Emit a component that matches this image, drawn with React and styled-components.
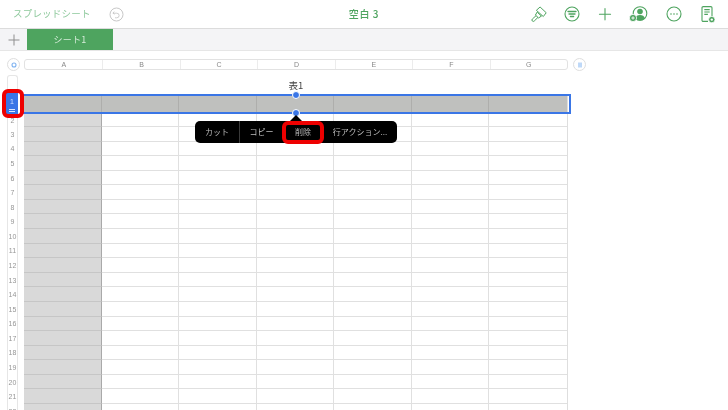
import React from "react";
import styled, { createGlobalStyle } from "styled-components";

const Global = createGlobalStyle`
  html, body { margin: 0; padding: 0; background: #fff; }
  body { font-family: "Noto Sans CJK JP", "Noto Sans", sans-serif; }
  #root { width: 728px; height: 410px; overflow: hidden; }
`;

const Page = styled.div`
  width: 728px; height: 410px; display: flex; flex-direction: column;
  overflow: hidden; background: #fff; filter: blur(0.3px);
`;
const TopBar = styled.header`
  height: 28px; flex: none; display: grid; grid-template-columns: 1fr auto 1fr;
  align-items: center; border-bottom: 1px solid #dcdcdc; color: #4ea45f;
`;
const TopLeft = styled.div`
  display: flex; align-items: center; gap: 18px; padding-left: 13px;
`;
const BackLabel = styled.span`
  font-size: 9.5px; color: #8fc99d; letter-spacing: 0.2px; line-height: 1;
`;
const Title = styled.div`
  font-size: 10px; font-weight: 500; color: #4ea45f; letter-spacing: 0.6px; line-height: 1;
`;
const TopRight = styled.div`
  display: flex; justify-content: flex-end; align-items: center; gap: 14px; padding-right: 10px;
`;
const TabBar = styled.div`
  height: 21px; flex: none; display: flex; background: #f4f4f6; border-bottom: 1px solid #e6e6e6;
`;
const AddTab = styled.div`
  width: 27px; display: flex; align-items: center; justify-content: center;
`;
const Tab = styled.div`
  width: 86px; background: #4ea45f; color: #d5ecd9; font-size: 9px; line-height: 1;
  display: flex; align-items: center; justify-content: center; letter-spacing: 0.3px;
`;
const Sheet = styled.main`
  position: relative; flex: 1; min-height: 0; padding-top: 8px; overflow: hidden;
`;
const ColBar = styled.div`
  display: flex; align-items: center; height: 11px; padding-left: 7px;
`;
const Knob = styled.div`
  width: 13px; height: 13px; border-radius: 50%; border: 1px solid #dedede; background: #fff;
  display: flex; align-items: center; justify-content: center; flex: none; box-sizing: border-box;
`;
const ColHeaders = styled.div`
  margin-left: 4px; margin-right: 5px; width: 544px; height: 11px; display: grid;
  grid-template-columns: repeat(7, 1fr); border: 1px solid #e2e2e2; border-radius: 3px; box-sizing: border-box;
`;
const ColHead = styled.div`
  font-family: "Liberation Sans", sans-serif; font-size: 7px; color: #888; line-height: 9px; text-align: center;
  border-left: ${p => (p.$first ? "none" : "1px solid #ececec")};
`;
const TableTitle = styled.div`
  height: 25px; width: 592px; text-align: center; font-size: 9.5px; line-height: 1; color: #444; padding-top: 11px;
  box-sizing: border-box;
`;
const Body = styled.div`
  display: flex; align-items: flex-start; padding-left: 7px;
`;
const RowHeads = styled.div`
  width: 11px; flex: none; margin-top: -20px; border: 1px solid #e6e6e6; border-bottom: none;
  border-radius: 3px 3px 0 0; box-sizing: border-box; padding-top: 19px;
`;
const RowHead = styled.div`
  height: ${p => p.$h}px; font-family: "Liberation Sans", sans-serif; font-size: 7px; color: #969696;
  display: flex; align-items: center; justify-content: center;
`;
const SelectedHead = styled.div`
  position: absolute; left: 6px; top: 42px; width: 13px; height: 22px; background: #3a76e6; color: #cfe0ff;
  font-family: "Liberation Sans", sans-serif; font-size: 7px; text-align: center; line-height: 18px;
  border-right: 1px solid #fff; box-sizing: border-box;
  &::after {
    content: ""; position: absolute; left: 3px; right: 3px; bottom: 3px; height: 1px;
    border-top: 1px solid #dfe9ff; border-bottom: 1px solid #dfe9ff;
  }
`;
const Grid = styled.div`
  margin-left: 6px; width: 544px; display: grid; grid-template-columns: repeat(7, 1fr);
  border-right: 1px solid #dedede; box-sizing: border-box;
`;
const Cell = styled.div`
  height: ${p => p.$h}px; box-sizing: border-box;
  background: ${p => (p.$kind === "head" ? "#bfc0be" : p.$kind === "col" ? "#d9d9d9" : "#fff")};
  border-bottom: 1px solid ${p => (p.$kind === "col" ? "#c6c6c6" : p.$kind === "head" ? "#bfc0be" : "#e0e0e0")};
  border-right: 1px solid ${p => (p.$kind === "head" ? "#aeaeac" : p.$kind === "col" ? "#a9a9a9" : "#e0e0e0")};
  &:nth-child(7n) { border-right: none; }
`;
const RowSelection = styled.div`
  position: absolute; left: 22px; top: 43px; width: 549px; height: 20px; border: 2px solid #3a76e6;
  box-sizing: border-box; pointer-events: none;
`;
const Handle = styled.div`
  position: absolute; left: 293px; top: ${p => p.$top}px; width: 6px; height: 6px; border-radius: 50%;
  background: #3a76e6; border: 1px solid #fff; box-sizing: content-box; margin: -1px;
`;
const Menu = styled.div`
  position: absolute; left: 195px; top: 70px; height: 22px; display: flex; align-items: center;
  background: #000; border-radius: 5px; color: #bcbcbc; font-size: 8px; line-height: 1;
  &::before {
    content: ""; position: absolute; left: 95px; top: -6px; border-left: 6px solid transparent;
    border-right: 6px solid transparent; border-bottom: 6px solid #000;
  }
`;
const MenuItem = styled.div`
  width: ${p => p.$w}px; height: 100%; display: flex; align-items: center; justify-content: center;
  border-left: ${p => (p.$div ? "1px solid #3a3a3a" : "none")}; box-sizing: border-box;
`;
const RedBox = styled.div`
  position: absolute; left: ${p => p.$l}px; top: ${p => p.$t}px; width: ${p => p.$w}px; height: ${p => p.$h}px;
  border: 4px solid #ee0000; border-radius: 6px; box-sizing: border-box; pointer-events: none;
`;

const G = "#4ea45f";
const Ico = ({ s = 20, children }) => (
  <svg width={s} height={s} viewBox="0 0 20 20" fill="none" stroke={G} strokeWidth="1.1" strokeLinecap="round" strokeLinejoin="round">
    {children}
  </svg>
);

const COLS = ["A", "B", "C", "D", "E", "F", "G"];
const ROW_H = 14.58;

export default function App() {
  const rows = Array.from({ length: 21 }, (_, i) => i + 2);
  return (
    <Page>
      <Global />
      <TopBar>
        <TopLeft>
          <BackLabel>スプレッドシート</BackLabel>
          <svg width="15" height="15" viewBox="0 0 15 15" fill="none" stroke="#c8c8c8" strokeWidth="1">
            <circle cx="7.5" cy="7.5" r="6.5" />
            <path d="M5.2 4.6 3.9 6.2l1.7 1M4.2 6.2h3.6a2.3 2.3 0 0 1 0 4.6H6" strokeWidth="0.9" />
          </svg>
        </TopLeft>
        <Title>空白 3</Title>
        <TopRight>
          <Ico s={18}>
            <path d="M11.5 2.5 18 8.6l-3.2 4.2-7.4-6.6z" />
            <path d="m8.5 8.5 3.5 3.2" />
            <path d="m8 7.8-2 3.4 3.6 3.2 3.2-2.2" />
            <path d="m6.6 12-4 3.6a1.5 1.5 0 0 0 2.1 2.2l3.9-3.8" />
          </Ico>
          <Ico>
            <circle cx="10" cy="10" r="7" />
            <path d="M6 7.5h8M7 10h6M8.4 12.5h3.2" strokeWidth="1.3" />
          </Ico>
          <Ico s={18}>
            <path d="M10 4v12.5M3.8 10.2h12.4" strokeWidth="1.2" />
          </Ico>
          <svg width="22" height="20" viewBox="0 0 22 20" fill="none">
            <circle cx="12" cy="9.5" r="6.8" stroke={G} strokeWidth="1.1" />
            <circle cx="12" cy="7.5" r="2.8" fill={G} />
            <path d="M7 14.6c.6-2.6 2.6-3.6 5-3.6s4.4 1 5 3.6a6.8 6.8 0 0 1-10 0z" fill={G} />
            <circle cx="5" cy="14" r="3.6" fill={G} stroke="#fff" strokeWidth="0.8" />
            <path d="M5 12.3v3.4M3.3 14h3.4" stroke="#fff" strokeWidth="0.9" />
          </svg>
          <Ico>
            <circle cx="10" cy="10" r="7" />
            <circle cx="7" cy="10" r="0.8" fill={G} stroke="none" />
            <circle cx="10" cy="10" r="0.8" fill={G} stroke="none" />
            <circle cx="13" cy="10" r="0.8" fill={G} stroke="none" />
          </Ico>
          <svg width="20" height="20" viewBox="0 0 20 20" fill="none" stroke={G} strokeWidth="1.1">
            <path d="M14 13V3.8a1.2 1.2 0 0 0-1.2-1.2H5.2A1.2 1.2 0 0 0 4 3.8v12.4a1.2 1.2 0 0 0 1.2 1.2H10" />
            <path d="M6.3 5.6h5.4M6.3 8h5.4M6.3 10.4h3.6" />
            <circle cx="13.8" cy="15.6" r="3.2" fill={G} stroke="#fff" strokeWidth="0.8" />
            <circle cx="13.8" cy="15.6" r="1.2" fill="#fff" stroke="none" />
          </svg>
        </TopRight>
      </TopBar>
      <TabBar>
        <AddTab>
          <svg width="12" height="12" viewBox="0 0 12 12" stroke="#8e8e8e" strokeWidth="1">
            <path d="M6 .5v11M.5 6h11" />
          </svg>
        </AddTab>
        <Tab>シート1</Tab>
      </TabBar>
      <Sheet>
        <ColBar>
          <Knob>
            <svg width="6" height="6" viewBox="0 0 6 6" fill="none" stroke="#7fb2f0" strokeWidth="1.1">
              <circle cx="3" cy="3" r="2" />
            </svg>
          </Knob>
          <ColHeaders>
            {COLS.map((c, i) => (
              <ColHead key={c} $first={i === 0}>{c}</ColHead>
            ))}
          </ColHeaders>
          <Knob>
            <svg width="6" height="6" viewBox="0 0 6 6" stroke="#7fb2f0" strokeWidth="1">
              <path d="M2 .5v5M4 .5v5" />
            </svg>
          </Knob>
        </ColBar>
        <TableTitle>表1</TableTitle>
        <Body>
          <RowHeads>
            <RowHead $h={19} />
            {rows.map((n, i) => (
              <RowHead key={n} $h={i === 0 ? 13 : ROW_H}>{n}</RowHead>
            ))}
          </RowHeads>
          <Grid>
            {COLS.map(c => <Cell key={c} $h={19} $kind="head" />)}
            {rows.map((n, i) =>
              COLS.map((c, j) => (
                <Cell key={c + n} $h={i === 0 ? 13 : ROW_H} $kind={j === 0 ? "col" : "cell"} />
              ))
            )}
          </Grid>
        </Body>
        <SelectedHead>1</SelectedHead>
        <RowSelection />
        <Handle $top={41} />
        <Handle $top={59} />
        <Menu>
          <MenuItem $w={44}>カット</MenuItem>
          <MenuItem $w={44} $div>コピー</MenuItem>
          <MenuItem $w={40}>削除</MenuItem>
          <MenuItem $w={74}>行アクション...</MenuItem>
        </Menu>
        <RedBox $l={282} $t={70} $w={42} $h={23} />
        <RedBox $l={2} $t={38} $w={22} $h={29} />
      </Sheet>
    </Page>
  );
}
